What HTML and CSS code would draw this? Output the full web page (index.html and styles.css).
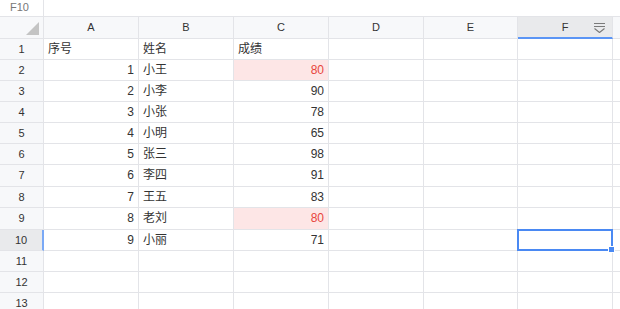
FILE: index.html
```html
<!DOCTYPE html>
<html>
<head>
    <title>成绩表</title>
    <link rel="stylesheet" href="styles.css">
</head>
<body>
    <div class="formula-bar">
        <div class="name-box">F10</div>
        <div class="formula-input"></div>
    </div>

    <div class="sheet">
        <!-- 列头 -->
        <div class="corner"><span class="corner-tri"></span></div>
        <div class="col-head">A</div>
        <div class="col-head">B</div>
        <div class="col-head">C</div>
        <div class="col-head">D</div>
        <div class="col-head">E</div>
        <div class="col-head active">F
            <svg class="filter-icon" width="13" height="11" viewBox="0 0 13 11">
                <path d="M1 1.5h11M1 4.5h11M1.5 6.5l5 4 5-4" fill="none" stroke="#7a7a7a" stroke-width="1.2"/>
            </svg>
        </div>
        <div class="col-rest"></div>

        <div class="row-head">1</div>
        <div class="cell">序号</div><div class="cell">姓名</div><div class="cell">成绩</div>
        <div class="cell"></div><div class="cell"></div><div class="cell"></div><div class="rest"></div>

        <div class="row-head">2</div>
        <div class="cell num">1</div><div class="cell">小王</div><div class="cell num warn">80</div>
        <div class="cell"></div><div class="cell"></div><div class="cell"></div><div class="rest"></div>

        <div class="row-head">3</div>
        <div class="cell num">2</div><div class="cell">小李</div><div class="cell num">90</div>
        <div class="cell"></div><div class="cell"></div><div class="cell"></div><div class="rest"></div>

        <div class="row-head">4</div>
        <div class="cell num">3</div><div class="cell">小张</div><div class="cell num">78</div>
        <div class="cell"></div><div class="cell"></div><div class="cell"></div><div class="rest"></div>

        <div class="row-head">5</div>
        <div class="cell num">4</div><div class="cell">小明</div><div class="cell num">65</div>
        <div class="cell"></div><div class="cell"></div><div class="cell"></div><div class="rest"></div>

        <div class="row-head">6</div>
        <div class="cell num">5</div><div class="cell">张三</div><div class="cell num">98</div>
        <div class="cell"></div><div class="cell"></div><div class="cell"></div><div class="rest"></div>

        <div class="row-head">7</div>
        <div class="cell num">6</div><div class="cell">李四</div><div class="cell num">91</div>
        <div class="cell"></div><div class="cell"></div><div class="cell"></div><div class="rest"></div>

        <div class="row-head">8</div>
        <div class="cell num">7</div><div class="cell">王五</div><div class="cell num">83</div>
        <div class="cell"></div><div class="cell"></div><div class="cell"></div><div class="rest"></div>

        <div class="row-head">9</div>
        <div class="cell num">8</div><div class="cell">老刘</div><div class="cell num warn">80</div>
        <div class="cell"></div><div class="cell"></div><div class="cell"></div><div class="rest"></div>

        <div class="row-head active">10</div>
        <div class="cell num">9</div><div class="cell">小丽</div><div class="cell num">71</div>
        <div class="cell"></div><div class="cell"></div><div class="cell selected"><span class="handle"></span></div><div class="rest"></div>

        <div class="row-head">11</div>
        <div class="cell"></div><div class="cell"></div><div class="cell"></div>
        <div class="cell"></div><div class="cell"></div><div class="cell"></div><div class="rest"></div>

        <div class="row-head">12</div>
        <div class="cell"></div><div class="cell"></div><div class="cell"></div>
        <div class="cell"></div><div class="cell"></div><div class="cell"></div><div class="rest"></div>

        <div class="row-head">13</div>
        <div class="cell"></div><div class="cell"></div><div class="cell"></div>
        <div class="cell"></div><div class="cell"></div><div class="cell"></div><div class="rest"></div>
    </div>
</body>
</html>
```

FILE: styles.css
```css
body {
    margin: 0;
    font-family: "Liberation Sans", "Noto Sans CJK SC", sans-serif;
    font-size: 12px;
    color: #333;
    background: #fff;
    overflow: hidden;
}

.formula-bar {
    display: flex;
    height: 17px;
    box-sizing: border-box;
    border-bottom: 1px solid #e3e4e8;
}

.name-box {
    width: 44px;
    box-sizing: border-box;
    border-right: 1px solid #e3e4e8;
    padding-left: 10px;
    font-size: 11px;
    line-height: 15px;
    color: #777;
}

.formula-input {
    flex: 1;
}

.sheet {
    display: grid;
    grid-template-columns: 44px 95px 95px 95px 95px 94px 95px 1fr;
    grid-template-rows: 22px 21px 21px 21px 21px 21px 21px 22px 21px 22px 21px 21px 21px 21px;
}

.sheet > div {
    box-sizing: border-box;
    border-right: 1px solid #e3e4e8;
    border-bottom: 1px solid #e3e4e8;
}

.corner {
    background: #f7f8fa;
    position: relative;
}

.corner-tri {
    position: absolute;
    right: 4px;
    bottom: 3px;
    width: 0;
    height: 0;
    border-left: 13px solid transparent;
    border-bottom: 13px solid #c4c4c4;
}

.col-head {
    background: #f7f8fa;
    text-align: center;
    font-size: 11px;
    line-height: 21px;
    color: #333;
    position: relative;
}

.col-head.active {
    background: #e9eaec;
    border-bottom: 2px solid #5b95f5 !important;
}

.filter-icon {
    position: absolute;
    right: 6px;
    top: 5px;
}

.col-rest {
    background: #f7f8fa;
    border-right: none !important;
}

.row-head {
    background: #f7f8fa;
    text-align: center;
    font-size: 11px;
    line-height: 20px;
    color: #333;
}

.row-head.active {
    background: #e9eaec;
    border-right: 2px solid #7aa9f6 !important;
}

.cell {
    padding: 0 4px;
    line-height: 20px;
    white-space: nowrap;
    overflow: hidden;
}

.cell.num {
    text-align: right;
}

.cell.warn {
    background: #fde6e6;
    color: #e8453c;
}

.rest {
    border-right: none !important;
}

.cell.selected {
    position: relative;
    overflow: visible;
}

.cell.selected::after {
    content: "";
    position: absolute;
    left: -1px;
    top: -1px;
    right: -1px;
    bottom: -1px;
    border: 2px solid #4a89f3;
}

.handle {
    position: absolute;
    right: -3px;
    bottom: -3px;
    width: 5px;
    height: 5px;
    background: #4a89f3;
    border: 1px solid #fff;
    z-index: 2;
}
```
